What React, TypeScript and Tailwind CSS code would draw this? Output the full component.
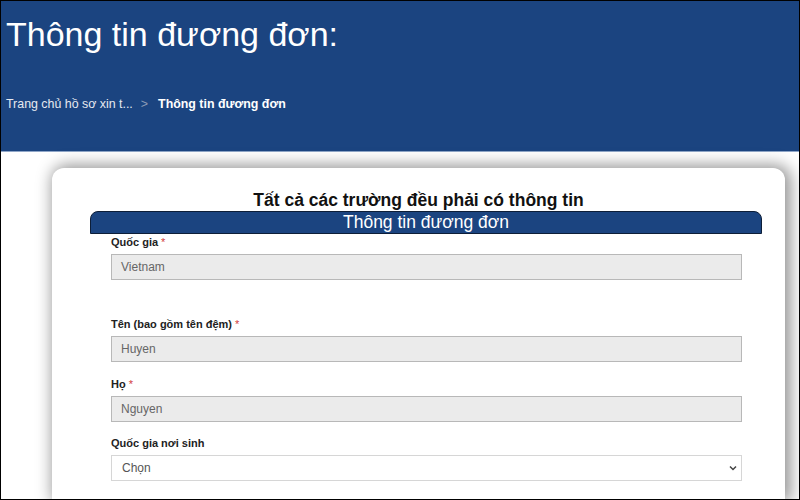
export default function App() {
  const font = { fontFamily: '"Liberation Sans", Arial, sans-serif' };
  return (
    <div
      className="w-[800px] h-[500px] overflow-hidden border border-black bg-white flex flex-col"
      style={font}
    >
      {/* Header */}
      <div className="h-[151px] shrink-0 bg-[#1b4480] border-b border-[#8fa6c8] px-[5px]">
        <h1 className="pt-[15px] text-[34px] leading-[36px] text-white">Thông tin đương đơn:</h1>
        <div className="mt-[44px] flex items-center text-[12.4px] leading-[16px]">
          <span className="text-[#e6e9f0]">Trang chủ hồ sơ xin t...</span>
          <span className="ml-[8px] text-[#8c9bb6]">&gt;</span>
          <span className="ml-[10px] font-bold text-white">Thông tin đương đơn</span>
        </div>
      </div>

      {/* Body */}
      <div className="flex-1 pt-[16px] pl-[51px] pr-[14px]">
        <div className="h-full rounded-t-[12px] bg-white shadow-[3px_0_16px_3px_rgba(0,0,0,0.42)]">
          <div className="pt-[22px] text-center text-[17.5px] leading-[21px] font-bold text-[#111]">
            Tất cả các trường đều phải có thông tin
          </div>
          <div className="ml-[38px] mr-[23px]">
            <div className="h-[23px] rounded-t-[8px] border border-[#0d1e38] bg-[#1b4480] text-center text-[17.5px] leading-[21px] text-white">
              Thông tin đương đơn
            </div>
            <div className="pl-[21px] pr-[20px] text-[11px]">
              <Field label="Quốc gia" required value="Vietnam" top="mt-[1px]" />
              <Field label="Tên (bao gồm tên đệm)" required value="Huyen" top="mt-[37px]" />
              <Field label="Họ" required value="Nguyen" top="mt-[15px]" />
              <div className="mt-[14px]">
                <div className="h-[14px] leading-[14px] font-bold text-[#222]">Quốc gia nơi sinh</div>
                <div className="mt-[5px] flex h-[26px] items-center justify-between border border-[#d6d6d6] bg-white pl-[10px] pr-[4px] text-[12px] text-[#555]">
                  <span>Chọn</span>
                  <svg width="8" height="6" viewBox="0 0 8 6" fill="none">
                    <path d="M1 1.5l3 3 3-3" stroke="#444" strokeWidth="1.5" />
                  </svg>
                </div>
              </div>
            </div>
          </div>
        </div>
      </div>
    </div>
  );
}

function Field({
  label,
  required,
  value,
  top,
}: {
  label: string;
  required?: boolean;
  value: string;
  top: string;
}) {
  return (
    <div className={top}>
      <div className="h-[14px] leading-[14px] font-bold text-[#222]">
        {label}
        {required && <span className="ml-[3px] font-normal text-[#d23c3c]">*</span>}
      </div>
      <div className="mt-[5px] flex h-[26px] items-center border border-[#b8b8b8] bg-[#ebebeb] pl-[9px] text-[12px] text-[#666]">
        {value}
      </div>
    </div>
  );
}
